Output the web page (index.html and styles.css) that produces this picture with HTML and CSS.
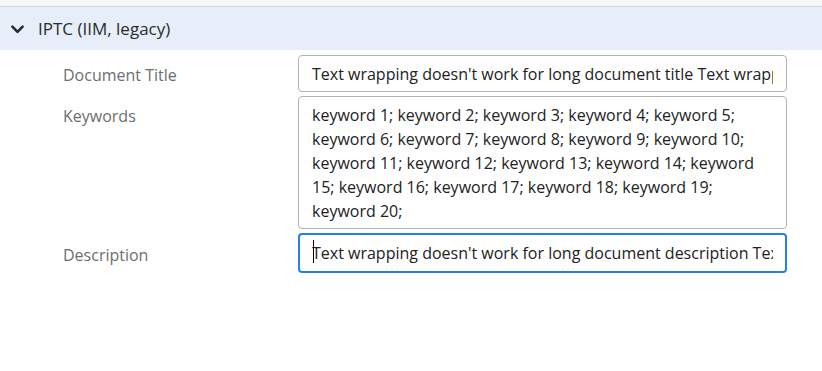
FILE: index.html
```html
<!DOCTYPE html>
<html>
<head>
<meta charset="utf-8">
<link rel="stylesheet" href="styles.css">
</head>
<body>
<div class="topstrip"></div>
<div class="section-header">
  <svg class="chevron" width="13" height="9" viewBox="0 0 13 9"><path d="M1.4 1.6 L6.5 6.8 L11.6 1.6" fill="none" stroke="#2c2c2c" stroke-width="2.6" stroke-linecap="round" stroke-linejoin="round"/></svg>
  <span class="section-title">IPTC (IIM, legacy)</span>
</div>
<div class="form">
  <label class="label" for="title">Document Title</label>
  <input class="field" id="title" type="text" value="Text wrapping doesn't work for long document title Text wrapping doesn't work for long document title">
  <label class="label" for="keywords">Keywords</label>
  <textarea class="field multiline" id="keywords" rows="5">keyword 1; keyword 2; keyword 3; keyword 4; keyword 5; keyword 6; keyword 7; keyword 8; keyword 9; keyword 10; keyword 11; keyword 12; keyword 13; keyword 14; keyword 15; keyword 16; keyword 17; keyword 18; keyword 19; keyword 20;</textarea>
  <label class="label label-low" for="description">Description</label>
  <div class="input-wrap">
    <input class="field focused" id="description" type="text" value="Text wrapping doesn't work for long document description Text wrapping doesn't work for long document description">
    <span class="caret"></span>
  </div>
</div>
</body>
</html>
```
FILE: styles.css
```css
html, body {
  margin: 0;
  padding: 0;
  background: #ffffff;
}
body {
  font-family: "Open Sans", "Lato", sans-serif;
  font-size: 16px;
  color: #2c2c2c;
}
.topstrip {
  height: 6px;
  background: #f7f7f7;
  border-bottom: 1px solid #d8d8d8;
}
.section-header {
  height: 43px;
  background: #e6eef9;
  display: flex;
  align-items: center;
  padding-left: 11px;
}
.chevron {
  display: block;
  margin-right: 14px;
  margin-top: 1px;
}
.section-title {
  font-size: 17px;
  color: #2c2c2c;
}
.form {
  display: grid;
  grid-template-columns: 235px 489px;
  row-gap: 4px;
  padding: 5px 0 0 63px;
}
.label {
  color: #6e6e6e;
  line-height: 24px;
  padding-top: 8px;
}
.label-low {
  padding-top: 10px;
}
.field {
  display: block;
  width: 100%;
  margin: 0;
  box-sizing: border-box;
  border: 1px solid #b3b3b3;
  border-radius: 4px;
  padding: 6px 13px 5px 13px;
  height: 37px;
  font-family: inherit;
  font-size: 16px;
  line-height: 24px;
  color: #222222;
  background: #ffffff;
  outline: none;
}
.field.multiline {
  height: 133px;
  padding-right: 12px;
  resize: none;
  overflow: hidden;
}
.input-wrap {
  position: relative;
}
.field.focused {
  height: 40px;
  border: 2px solid #2680eb;
  padding: 6px 12px 6px 12px;
}
.caret {
  position: absolute;
  left: 15px;
  top: 7px;
  width: 1px;
  height: 23px;
  background: #000;
}
```
